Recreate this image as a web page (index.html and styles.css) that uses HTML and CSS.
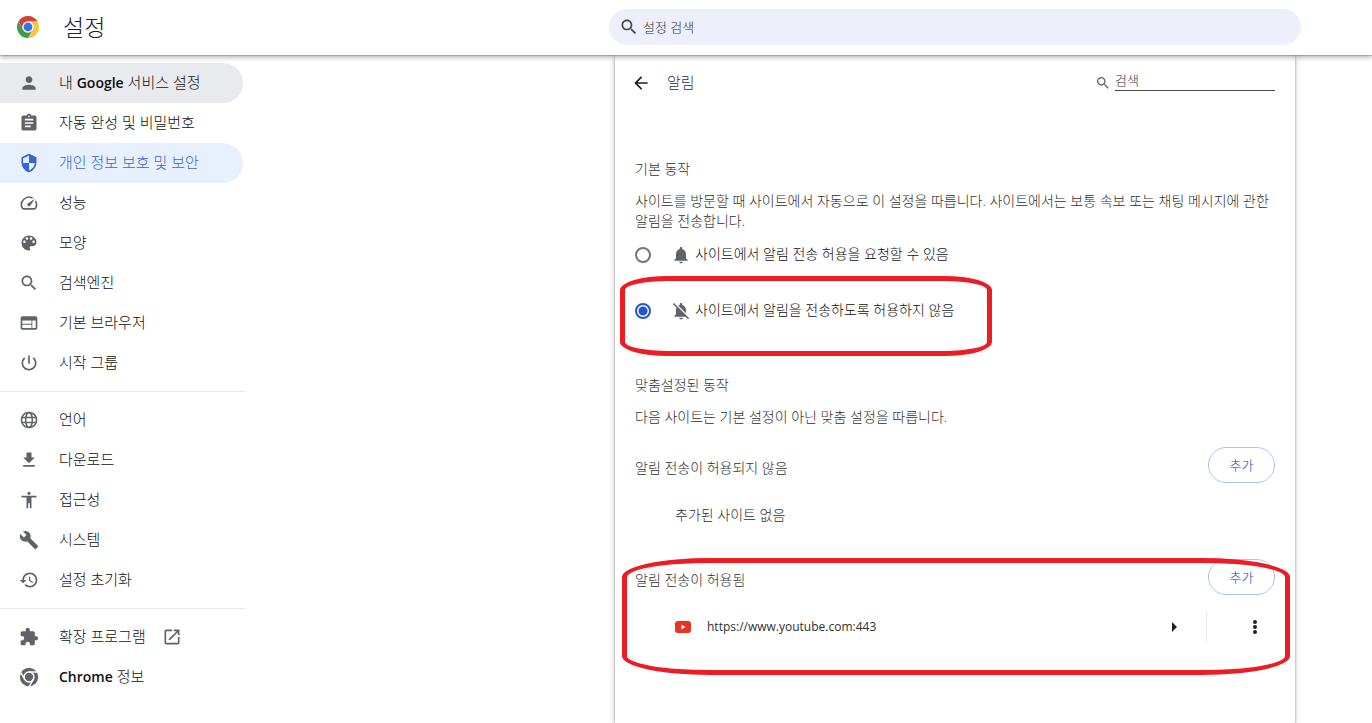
FILE: index.html
```html
<!DOCTYPE html>
<html lang="ko">
<head>
    <meta charset="UTF-8">
    <meta name="viewport" content="width=device-width, initial-scale=1.0">
    <title>설정 - 알림</title>
    <link rel="stylesheet" href="styles.css">
</head>
<body>
    <header class="toolbar">
        <div class="brand">
            <svg class="logo" viewBox="0 0 24 24" aria-hidden="true">
                <path fill="#d44332" d="M2.47 6.5A11 11 0 0 1 21.53 6.5H12A5.5 5.5 0 0 0 7.24 14.75Z"/>
                <path fill="#f6c644" d="M21.53 6.5A11 11 0 0 1 12 23L16.76 14.75A5.5 5.5 0 0 0 12 6.5Z"/>
                <path fill="#469a50" d="M12 23A11 11 0 0 1 2.47 6.5L7.24 14.75A5.5 5.5 0 0 0 16.76 14.75Z"/>
                <circle cx="12" cy="12" r="5.5" fill="#fff"/>
                <circle cx="12" cy="12" r="4.4" fill="#3871e0"/>
            </svg>
            <h1>설정</h1>
        </div>
        <label class="search-box">
            <svg class="icon" viewBox="0 0 24 24" aria-hidden="true"><path d="M15.5 14h-.79l-.28-.27C15.41 12.59 16 11.11 16 9.5 16 5.91 13.09 3 9.5 3S3 5.91 3 9.5 5.91 16 9.5 16c1.61 0 3.09-.59 4.23-1.57l.27.28v.79l5 4.99L20.49 19l-4.99-5zm-6 0C7.01 14 5 11.99 5 9.5S7.01 5 9.5 5 14 7.01 14 9.5 11.99 14 9.5 14z"/></svg>
            <input type="text" placeholder="설정 검색" aria-label="설정 검색">
        </label>
    </header>

    <div class="layout">
        <nav class="menu">
            <a class="hovered" href="#people">
                <svg class="icon" viewBox="0 0 24 24"><path d="M12 12c2.21 0 4-1.79 4-4s-1.79-4-4-4-4 1.79-4 4 1.79 4 4 4zm0 2c-2.67 0-8 1.34-8 4v2h16v-2c0-2.66-5.33-4-8-4z"/></svg>
                <span>내 <b>Google</b> 서비스 설정</span>
            </a>
            <a href="#autofill">
                <svg class="icon" viewBox="0 0 24 24"><path d="M19 3h-4.18C14.4 1.84 13.3 1 12 1c-1.3 0-2.4.84-2.82 2H5c-1.1 0-2 .9-2 2v14c0 1.1.9 2 2 2h14c1.1 0 2-.9 2-2V5c0-1.1-.9-2-2-2zm-7 0c.55 0 1 .45 1 1s-.45 1-1 1-1-.45-1-1 .45-1 1-1zm2 14H7v-2h7v2zm3-4H7v-2h10v2zm0-4H7V7h10v2z"/></svg>
                <span>자동 완성 및 비밀번호</span>
            </a>
            <a class="selected" href="#privacy">
                <svg class="icon" viewBox="0 0 24 24"><path d="M12 1L3 5v6c0 5.55 3.84 10.74 9 12 5.16-1.26 9-6.45 9-12V5l-9-4zm0 10.99h7c-.53 4.12-3.28 7.79-7 8.94V12H5V6.3l7-3.11v8.8z"/></svg>
                <span>개인 정보 보호 및 보안</span>
            </a>
            <a href="#performance">
                <svg class="icon" viewBox="0 0 24 24"><path d="M20.38 8.57l-1.23 1.85a8 8 0 0 1-.22 7.58H5.07A8 8 0 0 1 15.58 6.85l1.85-1.23A10 10 0 0 0 3.35 19a2 2 0 0 0 1.72 1h13.85a2 2 0 0 0 1.74-1 10 10 0 0 0-.27-10.44zm-9.79 6.84a2 2 0 0 0 2.83 0l5.66-8.49-8.49 5.66a2 2 0 0 0 0 2.83z"/></svg>
                <span>성능</span>
            </a>
            <a href="#appearance">
                <svg class="icon" viewBox="0 0 24 24"><path d="M12 3c-4.97 0-9 4.03-9 9s4.03 9 9 9c.83 0 1.5-.67 1.5-1.5 0-.39-.15-.74-.39-1.01-.23-.26-.38-.61-.38-.99 0-.83.67-1.5 1.5-1.5H16c2.76 0 5-2.24 5-5 0-4.42-4.03-8-9-8zm-5.5 9c-.83 0-1.5-.67-1.5-1.5S5.67 9 6.5 9 8 9.67 8 10.5 7.33 12 6.5 12zm3-4C8.67 8 8 7.33 8 6.5S8.67 5 9.5 5s1.5.67 1.5 1.5S10.33 8 9.5 8zm5 0c-.83 0-1.5-.67-1.5-1.5S13.67 5 14.5 5s1.5.67 1.5 1.5S15.33 8 14.5 8zm3 4c-.83 0-1.5-.67-1.5-1.5S16.67 9 17.5 9s1.5.67 1.5 1.5-.67 1.5-1.5 1.5z"/></svg>
                <span>모양</span>
            </a>
            <a href="#search">
                <svg class="icon" viewBox="0 0 24 24"><path d="M15.5 14h-.79l-.28-.27C15.41 12.59 16 11.11 16 9.5 16 5.91 13.09 3 9.5 3S3 5.91 3 9.5 5.91 16 9.5 16c1.61 0 3.09-.59 4.23-1.57l.27.28v.79l5 4.99L20.49 19l-4.99-5zm-6 0C7.01 14 5 11.99 5 9.5S7.01 5 9.5 5 14 7.01 14 9.5 11.99 14 9.5 14z"/></svg>
                <span>검색엔진</span>
            </a>
            <a href="#browser">
                <svg class="icon" viewBox="0 0 24 24"><path d="M20 4H4c-1.1 0-1.99.9-1.99 2L2 18c0 1.1.9 2 2 2h16c1.1 0 2-.9 2-2V6c0-1.1-.9-2-2-2zm-5 14H4v-4h11v4zm0-5H4V9h11v4zm5 5h-4V9h4v9z"/></svg>
                <span>기본 브라우저</span>
            </a>
            <a href="#startup">
                <svg class="icon" viewBox="0 0 24 24"><path d="M13 3h-2v10h2V3zm4.83 2.17l-1.42 1.42C17.99 7.86 19 9.81 19 12c0 3.87-3.13 7-7 7s-7-3.13-7-7c0-2.19 1.01-4.14 2.58-5.42L6.17 5.17C4.23 6.82 3 9.26 3 12c0 4.97 4.03 9 9 9s9-4.03 9-9c0-2.74-1.23-5.18-3.17-6.83z"/></svg>
                <span>시작 그룹</span>
            </a>
            <hr>
            <a href="#languages">
                <svg class="icon" viewBox="0 0 24 24"><g fill="none" stroke="currentColor" stroke-width="1.8"><circle cx="12" cy="12" r="9.1"/><ellipse cx="12" cy="12" rx="4" ry="9.1"/><path d="M3.5 9h17M3.5 15h17"/></g></svg>
                <span>언어</span>
            </a>
            <a href="#downloads">
                <svg class="icon" viewBox="0 0 24 24"><path d="M19 9h-4V3H9v6H5l7 7 7-7zM5 18v2h14v-2H5z"/></svg>
                <span>다운로드</span>
            </a>
            <a href="#accessibility">
                <svg class="icon" viewBox="0 0 24 24"><path d="M12 2c1.1 0 2 .9 2 2s-.9 2-2 2-2-.9-2-2 .9-2 2-2zm9 7h-6v13h-2v-6h-2v6H9V9H3V7h18v2z"/></svg>
                <span>접근성</span>
            </a>
            <a href="#system">
                <svg class="icon" viewBox="0 0 24 24"><path d="M22.7 19l-9.1-9.1c.9-2.3.4-5-1.5-6.9-2-2-5-2.4-7.4-1.3L9 6 6 9 1.6 4.7C.4 7.1.9 10.1 2.9 12.1c1.9 1.9 4.6 2.4 6.9 1.5l9.1 9.1c.4.4 1 .4 1.4 0l2.3-2.3c.5-.4.5-1.1.1-1.4z"/></svg>
                <span>시스템</span>
            </a>
            <a href="#reset">
                <svg class="icon" viewBox="0 0 24 24"><path d="M13 3c-4.97 0-9 4.03-9 9H1l3.89 3.89.07.14L9 12H6c0-3.87 3.13-7 7-7s7 3.13 7 7-3.13 7-7 7c-1.93 0-3.68-.79-4.94-2.06l-1.42 1.42C8.27 19.99 10.51 21 13 21c4.97 0 9-4.03 9-9s-4.03-9-9-9zm-1 5v5l4.28 2.54.72-1.21-3.5-2.08V8H12z"/></svg>
                <span>설정 초기화</span>
            </a>
            <hr>
            <a href="#extensions">
                <svg class="icon" viewBox="0 0 24 24"><path d="M20.5 11H19V7c0-1.1-.9-2-2-2h-4V3.5C13 2.12 11.88 1 10.5 1S8 2.12 8 3.5V5H4c-1.1 0-1.99.9-1.99 2v3.8H3.5c1.49 0 2.7 1.21 2.7 2.7s-1.21 2.7-2.7 2.7H2V20c0 1.1.9 2 2 2h3.8v-1.5c0-1.49 1.21-2.7 2.7-2.7 1.49 0 2.7 1.21 2.7 2.7V22H17c1.1 0 2-.9 2-2v-4h1.5c1.38 0 2.5-1.12 2.5-2.5S21.88 11 20.5 11z"/></svg>
                <span>확장 프로그램</span>
                <svg class="icon external" viewBox="0 0 24 24"><path d="M19 19H5V5h7V3H5c-1.11 0-2 .9-2 2v14c0 1.1.89 2 2 2h14c1.1 0 2-.9 2-2v-7h-2v7zM14 3v2h3.59l-9.83 9.83 1.41 1.41L19 6.41V10h2V3h-7z"/></svg>
            </a>
            <a href="#about">
                <svg class="icon" viewBox="0 0 24 24"><circle cx="12" cy="12" r="11"/><circle cx="12" cy="12" r="5.9" fill="none" stroke="#fff" stroke-width="1.8"/><path fill="none" stroke="#fff" stroke-width="1.8" d="M12 6.1H22.5M17.1 14.9L11.9 24M6.9 14.9L1.6 5.8"/></svg>
                <span><b>Chrome</b> 정보</span>
            </a>
        </nav>

        <main class="card">
            <div class="page-head">
                <button class="icon-button back" type="button" aria-label="뒤로">
                    <svg class="icon" viewBox="0 0 24 24"><path d="M20 11H7.83l5.59-5.59L12 4l-8 8 8 8 1.41-1.41L7.83 13H20v-2z"/></svg>
                </button>
                <h2>알림</h2>
                <label class="page-search">
                    <svg class="icon" viewBox="0 0 24 24" aria-hidden="true"><path d="M15.5 14h-.79l-.28-.27C15.41 12.59 16 11.11 16 9.5 16 5.91 13.09 3 9.5 3S3 5.91 3 9.5 5.91 16 9.5 16c1.61 0 3.09-.59 4.23-1.57l.27.28v.79l5 4.99L20.49 19l-4.99-5zm-6 0C7.01 14 5 11.99 5 9.5S7.01 5 9.5 5 14 7.01 14 9.5 11.99 14 9.5 14z"/></svg>
                    <input type="text" placeholder="검색" aria-label="검색">
                </label>
            </div>

            <section class="default-behavior">
                <h3>기본 동작</h3>
                <p>사이트를 방문할 때 사이트에서 자동으로 이 설정을 따릅니다. 사이트에서는 보통 속보 또는 채팅 메시지에 관한 알림을 전송합니다.</p>
                <div class="options">
                    <label class="option">
                        <input type="radio" name="notifications" value="ask">
                        <svg class="icon" viewBox="0 0 24 24"><path d="M12 22c1.1 0 2-.9 2-2h-4c0 1.1.89 2 2 2zm6-6v-5c0-3.07-1.64-5.64-4.5-6.32V4c0-.83-.67-1.5-1.5-1.5s-1.5.67-1.5 1.5v.68C7.63 5.36 6 7.92 6 11v5l-2 2v1h16v-1l-2-2z"/></svg>
                        <span>사이트에서 알림 전송 허용을 요청할 수 있음</span>
                    </label>
                    <label class="option">
                        <input type="radio" name="notifications" value="block" checked>
                        <svg class="icon" viewBox="0 0 24 24"><path d="M3.6 2.3L2.2 3.7l4.5 4.5C6.2 9 6 10 6 11v5l-2 2v1h13.5l3 3 1.4-1.4zM12 22c1.11 0 2-.89 2-2h-4c0 1.11.89 2 2 2zm6-7.32V11c0-3.08-1.64-5.64-4.5-6.32V4c0-.83-.67-1.5-1.5-1.5s-1.5.67-1.5 1.5v.68c-.71.16-1.36.44-1.93.82L18 14.68z"/></svg>
                        <span>사이트에서 알림을 전송하도록 허용하지 않음</span>
                    </label>
                </div>
            </section>

            <section class="custom-behavior">
                <h3>맞춤설정된 동작</h3>
                <p>다음 사이트는 기본 설정이 아닌 맞춤 설정을 따릅니다.</p>

                <div class="list-head">
                    <h4>알림 전송이 허용되지 않음</h4>
                    <button class="add" type="button">추가</button>
                </div>
                <div class="site-row">추가된 사이트 없음</div>

                <div class="list-head">
                    <h4>알림 전송이 허용됨</h4>
                    <button class="add" type="button">추가</button>
                </div>
                <div class="site-row">
                    <svg class="favicon" viewBox="0 0 16 12" aria-hidden="true"><rect width="16" height="12" rx="3" fill="#e93323"/><path fill="#fff" d="M6.5 3.6v4.8L10.5 6z"/></svg>
                    <span class="url">https://www.youtube.com:443</span>
                    <button class="icon-button" type="button" aria-label="사이트 세부정보">
                        <svg class="icon" viewBox="0 0 20 20"><path d="M8 5v10l5-5z"/></svg>
                    </button>
                    <span class="divider"></span>
                    <button class="icon-button" type="button" aria-label="추가 작업">
                        <svg class="icon" viewBox="0 0 20 20"><circle cx="10" cy="5" r="2"/><circle cx="10" cy="10" r="2"/><circle cx="10" cy="15" r="2"/></svg>
                    </button>
                </div>
            </section>

            <div class="marker marker-option"></div>
            <div class="marker marker-allowed"></div>
        </main>
    </div>
</body>
</html>
```
FILE: styles.css
```css
* {
    box-sizing: border-box;
}

body {
    margin: 0;
    min-height: 100vh;
    display: flex;
    flex-direction: column;
    font-family: "Open Sans", "Noto Sans CJK KR", sans-serif;
    font-size: 14px;
    font-weight: 300;
    line-height: 20px;
    color: #202124;
    background: #fff;
}

h1, h2, h3, h4, p {
    margin: 0;
    font-size: 14px;
    font-weight: 300;
}

input, button {
    font-family: inherit;
    font-size: 13px;
    font-weight: 300;
    margin: 0;
    padding: 0;
}

.icon {
    width: 20px;
    height: 20px;
    flex: none;
    fill: currentColor;
    color: #5f6368;
}

/* Top bar */
.toolbar {
    position: relative;
    z-index: 1;
    height: 55px;
    padding-bottom: 1px;
    display: grid;
    grid-template-columns: 1fr minmax(0, 692px) 71px;
    align-items: center;
    background: #fff;
    box-shadow: 0 1px 0 rgba(0, 0, 0, 0.15), 0 2px 5px rgba(0, 0, 0, 0.35);
}

.brand {
    display: flex;
    align-items: center;
    gap: 23px;
    padding-left: 16px;
}

.logo {
    width: 24px;
    height: 24px;
}

h1 {
    font-size: 23px;
    line-height: 32px;
}

.search-box {
    display: flex;
    align-items: center;
    gap: 4px;
    height: 36px;
    padding: 0 20px 0 10px;
    border-radius: 18px;
    background: #edf0fa;
}

.search-box .icon {
    color: #444746;
}

.search-box input {
    flex: 1;
    border: none;
    background: none;
    outline: none;
}

input::placeholder {
    color: #303030;
    opacity: 1;
}

/* Page columns */
.layout {
    flex: 1;
    display: grid;
    grid-template-columns: minmax(245px, 1fr) minmax(0, 680px) 77px;
}

.menu {
    width: 245px;
    padding-top: 8px;
}

.menu a {
    display: flex;
    align-items: center;
    gap: 20px;
    height: 40px;
    margin-right: 2px;
    padding-left: 19px;
    border-radius: 0 20px 20px 0;
    font-size: 15px;
    color: #111;
    text-decoration: none;
}

.menu span {
    padding-bottom: 2px;
}

.menu b {
    font-size: 14px;
    font-weight: 600;
}

.menu .hovered {
    background: #e8eaed;
}

.menu .selected,
.menu .selected .icon {
    color: #3367d6;
}

.menu .selected {
    background: #e8f0fe;
}

.menu .external {
    margin-left: -4px;
}

.menu hr {
    margin: 8px 0;
    border: none;
    border-top: 1px solid #e8e8e8;
}

/* Content card */
.card {
    position: relative;
    padding: 0 20px;
    background: #fff;
    box-shadow: 0 0 2px rgba(0, 0, 0, 0.3), 0 2px 6px rgba(0, 0, 0, 0.25);
    color: #303030;
}

.page-head {
    display: flex;
    align-items: center;
    height: 56px;
}

.page-head h2 {
    flex: 1;
    padding-bottom: 2px;
    font-size: 15px;
}

.icon-button {
    display: flex;
    border: none;
    background: none;
    cursor: pointer;
}

.icon-button .icon {
    color: #202124;
}

.back {
    margin: 0 16px 0 -4px;
}

.page-search {
    display: flex;
    align-items: center;
    gap: 4px;
}

.page-search .icon {
    width: 16px;
    height: 16px;
}

.page-search input {
    width: 160px;
    height: 20px;
    margin-bottom: 4px;
    padding-bottom: 2px;
    border: none;
    border-bottom: 1px solid #474747;
    outline: none;
}

.default-behavior {
    padding-top: 48px;
}

h3 + p {
    margin-top: 12px;
}

.options {
    display: flex;
    flex-direction: column;
    gap: 8px;
}

.option {
    display: flex;
    align-items: center;
    height: 48px;
    color: #111;
}

.option span {
    padding-bottom: 2px;
}

.option input {
    appearance: none;
    width: 16px;
    height: 16px;
    margin-right: 20px;
    border: 2px solid #757575;
    border-radius: 50%;
}

.option input:checked {
    border-color: #2456cb;
    background: radial-gradient(circle, #2456cb 4px, #fff 5px);
}

.option .icon {
    margin-right: 4px;
}

.custom-behavior {
    padding-top: 40px;
}

.list-head {
    display: flex;
    align-items: center;
    justify-content: space-between;
    margin-top: 20px;
}

.list-head h4 {
    padding-top: 6px;
}

.add {
    width: 67px;
    height: 36px;
    padding-bottom: 2px;
    border: 1px solid #a8c4f7;
    border-radius: 18px;
    background: #fff;
    color: #0b48cc;
    cursor: pointer;
}

.site-row {
    display: flex;
    align-items: center;
    height: 48px;
    margin-top: 8px;
    padding: 0 10px 0 40px;
}

.favicon {
    width: 16px;
    height: 12px;
    margin-right: 16px;
}

.url {
    flex: 1;
    font-size: 12px;
    font-weight: 400;
}

.divider {
    height: 32px;
    margin: 0 38px 0 22px;
    border-left: 1px solid #e8e8e8;
}

/* Red outlines drawn over the settings to point them out */
.marker {
    position: absolute;
    border: 5px solid #ed1c24;
    pointer-events: none;
}

.marker-option {
    top: 221px;
    left: 5px;
    width: 372px;
    height: 80px;
    border-radius: 48px / 14px;
}

.marker-allowed {
    top: 503px;
    left: 7px;
    right: 5px;
    height: 117px;
    border-radius: 88px / 19px;
}
```
